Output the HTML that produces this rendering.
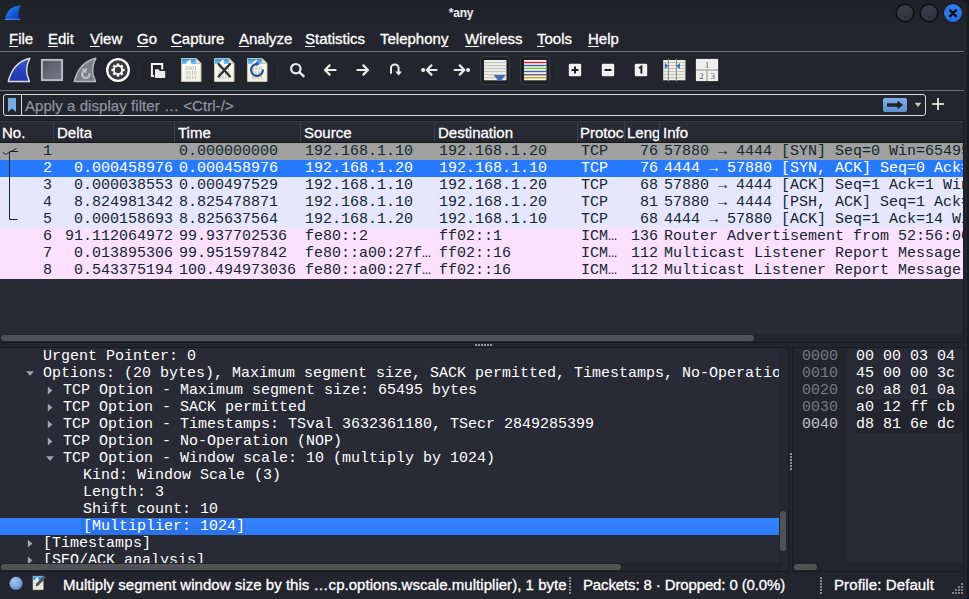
<!DOCTYPE html>
<html>
<head>
<meta charset="utf-8">
<title>*any</title>
<style>
*{box-sizing:border-box;margin:0;padding:0}
html,body{width:969px;height:599px;overflow:hidden;background:#23252e;font-family:"Liberation Sans",sans-serif}
body{position:relative;font-family:"Liberation Sans",sans-serif;color:#fff;font-size:15px}
.abs{position:absolute}
/* title bar */
#titlebar{left:0;top:0;width:969px;height:27px;background:linear-gradient(#1f2129,#23252e)}
#title{left:0;top:0;width:922px;text-align:center;font-size:12px;line-height:27px;font-weight:bold;color:#eeeeef;letter-spacing:-0.15px}
.wbtn{width:18px;height:18px;border-radius:9px;top:4px;background:linear-gradient(#393c48,#30333e);border:1px solid #0b0d12;box-shadow:0 0 0 0.4px #0b0d12}
/* menubar */
#menubar{left:0;top:27px;width:969px;height:24px;background:#23252e}
.menu{-webkit-text-stroke:0.3px #fff;top:30px;font-size:15px;line-height:18px;color:#fff;white-space:nowrap}
.menu u{text-decoration:underline;text-underline-offset:2px;text-decoration-thickness:1px}
.hline{left:0;width:964px;height:1px;background:#6f717a}
/* toolbar */
#toolbar{left:0;top:52px;width:969px;height:38px;background:#23252e}
.vsep{top:61px;width:1px;height:19px;background:#2a2c36}
/* filter */
#filterbox{left:3px;top:94px;width:923px;height:22px;border:1px solid #dcdcd6;border-radius:3px;background:#23252e}
#filtertext{left:25px;top:97px;font-size:15px;line-height:18px;color:#9092a0;-webkit-text-stroke:0.25px #9092a0;letter-spacing:0.06px;white-space:nowrap}
/* packet list */
#plhead{left:0;top:121px;width:963px;height:22px;background:linear-gradient(#292c37,#242630);border-top:1px solid #373a44;border-bottom:1px solid #14161e}
.hcell{-webkit-text-stroke:0.3px #fff;top:124px;font-size:15px;line-height:18px;color:#fff;white-space:nowrap;overflow:hidden}
.hsep{top:122px;width:1px;height:20px;background:#3d3f4a}
.prow{left:0;width:963px;height:17px;font-family:"Liberation Mono",monospace;font-size:15px;line-height:17px;color:#12272e;white-space:nowrap;overflow:hidden}
.prow span{position:absolute;top:0;height:17px;overflow:hidden;white-space:pre}
.c0{left:0;width:52px;text-align:right}
.c1{left:53px;width:120px;text-align:right}
.c2{left:179px;width:122px}
.c3{left:305px;width:129px}
.c4{left:439px;width:139px}
.c5{left:581px;width:43px}
.c6{left:625px;width:33px;text-align:right}
.c7{left:664px;width:299px}
.syn{background:#a0a0a0}
.sel{background:#277aff;color:#fff}
.tcp{background:#e7e6ff}
.icmp{background:#fce0ff}
/* details */
.drow{left:0;width:779px;height:17px;font-family:"Liberation Mono",monospace;font-size:15px;line-height:17px;color:#fff;white-space:pre;overflow:hidden}
.tri{position:absolute;width:0;height:0}
/* hex */
.hx{font-family:"Liberation Mono",monospace;font-size:15px;line-height:17px;white-space:pre}
/* status */
.st{-webkit-text-stroke:0.3px #fff;top:576px;font-size:15px;line-height:18px;color:#fff;white-space:nowrap}
</style>
</head>
<body>
<!-- TITLE BAR -->
<div id="titlebar" class="abs"></div>
<div id="title" class="abs">*any</div>
<svg class="abs" style="left:4px;top:4px" width="18" height="17" viewBox="0 0 18 17"><defs><linearGradient id="tg" x1="0.1" y1="0.1" x2="0.85" y2="0.95"><stop offset="0" stop-color="#2f93f4"/><stop offset="0.45" stop-color="#1565dc"/><stop offset="1" stop-color="#0838ac"/></linearGradient></defs><path d="M1.1 15.9 C1.9 8.6 5.4 2.6 17 1.2 C14.2 5.5 13.8 10.5 16.1 15.9 Z" fill="url(#tg)"/><path d="M1.4 15.5 Q8 14.6 15.9 15.5" stroke="#7fb0f4" stroke-width="0.9" opacity="0.75" fill="none"/></svg>
<div class="abs wbtn" style="left:896px"></div>
<div class="abs wbtn" style="left:920px"></div>
<div class="abs wbtn" style="left:944px;background:linear-gradient(#2d7df6,#2670e0);border-color:#2a77ee"></div>
<svg class="abs" style="left:944px;top:4px" width="18" height="18" viewBox="0 0 18 18"><path d="M6.1 6.3 L11.9 12.1 M11.9 6.3 L6.1 12.1" stroke="#06080d" stroke-width="2.4" stroke-linecap="round"/></svg>

<!-- MENU BAR -->
<div id="menubar" class="abs"></div>
<div class="abs menu" style="left:9px"><u>F</u>ile</div>
<div class="abs menu" style="left:48px"><u>E</u>dit</div>
<div class="abs menu" style="left:90px"><u>V</u>iew</div>
<div class="abs menu" style="left:137px"><u>G</u>o</div>
<div class="abs menu" style="left:171px"><u>C</u>apture</div>
<div class="abs menu" style="left:239px"><u>A</u>nalyze</div>
<div class="abs menu" style="left:305px"><u>S</u>tatistics</div>
<div class="abs menu" style="left:380px">Telephon<u>y</u></div>
<div class="abs menu" style="left:465px"><u>W</u>ireless</div>
<div class="abs menu" style="left:537px"><u>T</u>ools</div>
<div class="abs menu" style="left:588px"><u>H</u>elp</div>
<div class="abs hline" style="top:51px"></div>

<!-- TOOLBAR -->
<div id="toolbar" class="abs"></div>
<div class="abs hline" style="top:90px"></div>

<!-- shark start -->
<svg class="abs" style="left:6px;top:56px" width="27" height="28" viewBox="0 0 27 28"><defs><linearGradient id="sb" x1="0" y1="0" x2="0" y2="1"><stop offset="0" stop-color="#3a55d6"/><stop offset="1" stop-color="#1d36ad"/></linearGradient></defs>
<path d="M2.3 25.5 C5 14.5 12 5.2 23.8 2.3 C19.8 9.5 19.6 17.5 23.5 25.5 Z" fill="url(#sb)" stroke="#dcdde2" stroke-width="1.4" stroke-linejoin="round"/></svg>
<!-- stop -->
<svg class="abs" style="left:40px;top:58px" width="24" height="24" viewBox="0 0 24 24"><defs><linearGradient id="sq" x1="0" y1="0" x2="1" y2="1"><stop offset="0" stop-color="#555864"/><stop offset="1" stop-color="#777a85"/></linearGradient></defs>
<rect x="1.9" y="1.9" width="20.2" height="20.2" fill="url(#sq)" stroke="#b6b8c2" stroke-width="2"/></svg>
<!-- restart -->
<svg class="abs" style="left:72px;top:56px" width="27" height="28" viewBox="0 0 27 28">
<path d="M2.3 25.5 C5 14.5 12 5.2 23.8 2.3 C19.8 9.5 19.6 17.5 23.5 25.5 Z" fill="#7b7e89" stroke="#b7b9c1" stroke-width="1.4" stroke-linejoin="round"/>
<path d="M17.2 17.1 A3.6 3.6 0 1 1 12 15.2" fill="none" stroke="#bcbec6" stroke-width="2.1"/><path d="M9.5 13 L15.1 12.2 L14 17.8 Z" fill="#bcbec6"/></svg>
<!-- options gear -->
<svg class="abs" style="left:105px;top:57px" width="26" height="26" viewBox="0 0 26 26">
<circle cx="13" cy="13" r="10.8" fill="#3b3b3f" stroke="#fff" stroke-width="2.3"/>
<g fill="#fff"><circle cx="13" cy="13" r="5"/>
<g id="teeth"><rect x="11.7" y="6.5" width="2.6" height="13" rx="0.5"/><rect x="11.7" y="6.5" width="2.6" height="13" rx="0.5" transform="rotate(45 13 13)"/><rect x="11.7" y="6.5" width="2.6" height="13" rx="0.5" transform="rotate(90 13 13)"/><rect x="11.7" y="6.5" width="2.6" height="13" rx="0.5" transform="rotate(135 13 13)"/></g></g>
<circle cx="13" cy="13" r="3.2" fill="#3b3b3f"/></svg>
<div class="abs vsep" style="left:139px"></div>
<!-- open -->
<svg class="abs" style="left:150px;top:61px" width="17" height="18" viewBox="0 0 17 18"><path d="M4 14.9 H1.9 V3.1 H12.2 V8.6" fill="none" stroke="#f4f4f4" stroke-width="2"/><path d="M5 8.2 H8.6 L9.8 10 H15.2 V16.9 H5 Z" fill="#ececea" stroke="#23252e" stroke-width="1.8" paint-order="stroke fill"/></svg>
<svg class="abs" style="left:181px;top:58px" width="21" height="24" viewBox="0 0 21 24"><defs><linearGradient id="dg181" x1="0" y1="0" x2="0" y2="1"><stop offset="0" stop-color="#ffffff"/><stop offset="1" stop-color="#f1f0dc"/></linearGradient><linearGradient id="dh181" x1="0" y1="0" x2="0" y2="1"><stop offset="0" stop-color="#2f95e8"/><stop offset="1" stop-color="#86c4f2"/></linearGradient></defs>
<path d="M0.5 0.5 H15 L20 5.5 V23.5 H0.5 Z" fill="url(#dg181)" stroke="#c3c2ae" stroke-width="1"/>
<path d="M1 1 H14.8 L19.5 5.7 V6 H1 Z" fill="url(#dh181)"/>
<path d="M5.2 6 C5.8 3.8 7.6 2 10.2 1.6 C9.5 3 9.5 4.6 10.2 6 Z" fill="#fff" opacity="0.95"/>
<path d="M15 0.5 V5.5 H20 Z" fill="#e9e8da" stroke="#c3c2ae" stroke-width="0.7"/>
<rect x="5.2" y="8.6" width="1.9" height="3.2" rx="0.8" fill="none" stroke="#b9b9b0" stroke-width="0.7"/><rect x="8.5" y="8.4" width="0.9" height="3.6" fill="#b9b9b0"/><rect x="10.6" y="8.6" width="1.9" height="3.2" rx="0.8" fill="none" stroke="#b9b9b0" stroke-width="0.7"/><rect x="13.9" y="8.4" width="0.9" height="3.6" fill="#b9b9b0"/><rect x="5.2" y="13.2" width="1.9" height="3.2" rx="0.8" fill="none" stroke="#b9b9b0" stroke-width="0.7"/><rect x="8.5" y="13.0" width="0.9" height="3.6" fill="#b9b9b0"/><rect x="11.2" y="13.0" width="0.9" height="3.6" fill="#b9b9b0"/><rect x="13.3" y="13.2" width="1.9" height="3.2" rx="0.8" fill="none" stroke="#b9b9b0" stroke-width="0.7"/><rect x="5.2" y="17.8" width="1.9" height="3.2" rx="0.8" fill="none" stroke="#b9b9b0" stroke-width="0.7"/><rect x="8.5" y="17.6" width="0.9" height="3.6" fill="#b9b9b0"/><rect x="11.2" y="17.6" width="0.9" height="3.6" fill="#b9b9b0"/><rect x="13.9" y="17.6" width="0.9" height="3.6" fill="#b9b9b0"/>
</svg>
<svg class="abs" style="left:214px;top:58px" width="21" height="24" viewBox="0 0 21 24"><defs><linearGradient id="dg214" x1="0" y1="0" x2="0" y2="1"><stop offset="0" stop-color="#ffffff"/><stop offset="1" stop-color="#f1f0dc"/></linearGradient><linearGradient id="dh214" x1="0" y1="0" x2="0" y2="1"><stop offset="0" stop-color="#2f95e8"/><stop offset="1" stop-color="#86c4f2"/></linearGradient></defs>
<path d="M0.5 0.5 H15 L20 5.5 V23.5 H0.5 Z" fill="url(#dg214)" stroke="#c3c2ae" stroke-width="1"/>
<path d="M1 1 H14.8 L19.5 5.7 V6 H1 Z" fill="url(#dh214)"/>
<path d="M5.2 6 C5.8 3.8 7.6 2 10.2 1.6 C9.5 3 9.5 4.6 10.2 6 Z" fill="#fff" opacity="0.95"/>
<path d="M15 0.5 V5.5 H20 Z" fill="#e9e8da" stroke="#c3c2ae" stroke-width="0.7"/>
<rect x="5.2" y="8.6" width="1.9" height="3.2" rx="0.8" fill="none" stroke="#b9b9b0" stroke-width="0.7"/><rect x="8.5" y="8.4" width="0.9" height="3.6" fill="#b9b9b0"/><rect x="10.6" y="8.6" width="1.9" height="3.2" rx="0.8" fill="none" stroke="#b9b9b0" stroke-width="0.7"/><rect x="13.9" y="8.4" width="0.9" height="3.6" fill="#b9b9b0"/><rect x="5.2" y="13.2" width="1.9" height="3.2" rx="0.8" fill="none" stroke="#b9b9b0" stroke-width="0.7"/><rect x="8.5" y="13.0" width="0.9" height="3.6" fill="#b9b9b0"/><rect x="11.2" y="13.0" width="0.9" height="3.6" fill="#b9b9b0"/><rect x="13.3" y="13.2" width="1.9" height="3.2" rx="0.8" fill="none" stroke="#b9b9b0" stroke-width="0.7"/><rect x="5.2" y="17.8" width="1.9" height="3.2" rx="0.8" fill="none" stroke="#b9b9b0" stroke-width="0.7"/><rect x="8.5" y="17.6" width="0.9" height="3.6" fill="#b9b9b0"/><rect x="11.2" y="17.6" width="0.9" height="3.6" fill="#b9b9b0"/><rect x="13.9" y="17.6" width="0.9" height="3.6" fill="#b9b9b0"/>
<path d="M4.6 6 L16 18.4 M16 6 L4.6 18.4" stroke="#2a2c33" stroke-width="2.2" stroke-linecap="round"/></svg>
<svg class="abs" style="left:247px;top:58px" width="21" height="24" viewBox="0 0 21 24"><defs><linearGradient id="dg247" x1="0" y1="0" x2="0" y2="1"><stop offset="0" stop-color="#ffffff"/><stop offset="1" stop-color="#f1f0dc"/></linearGradient><linearGradient id="dh247" x1="0" y1="0" x2="0" y2="1"><stop offset="0" stop-color="#2f95e8"/><stop offset="1" stop-color="#86c4f2"/></linearGradient></defs>
<path d="M0.5 0.5 H15 L20 5.5 V23.5 H0.5 Z" fill="url(#dg247)" stroke="#c3c2ae" stroke-width="1"/>
<path d="M1 1 H14.8 L19.5 5.7 V6 H1 Z" fill="url(#dh247)"/>
<path d="M5.2 6 C5.8 3.8 7.6 2 10.2 1.6 C9.5 3 9.5 4.6 10.2 6 Z" fill="#fff" opacity="0.95"/>
<path d="M15 0.5 V5.5 H20 Z" fill="#e9e8da" stroke="#c3c2ae" stroke-width="0.7"/>
<rect x="5.2" y="8.6" width="1.9" height="3.2" rx="0.8" fill="none" stroke="#b9b9b0" stroke-width="0.7"/><rect x="8.5" y="8.4" width="0.9" height="3.6" fill="#b9b9b0"/><rect x="10.6" y="8.6" width="1.9" height="3.2" rx="0.8" fill="none" stroke="#b9b9b0" stroke-width="0.7"/><rect x="13.9" y="8.4" width="0.9" height="3.6" fill="#b9b9b0"/><rect x="5.2" y="13.2" width="1.9" height="3.2" rx="0.8" fill="none" stroke="#b9b9b0" stroke-width="0.7"/><rect x="8.5" y="13.0" width="0.9" height="3.6" fill="#b9b9b0"/><rect x="11.2" y="13.0" width="0.9" height="3.6" fill="#b9b9b0"/><rect x="13.3" y="13.2" width="1.9" height="3.2" rx="0.8" fill="none" stroke="#b9b9b0" stroke-width="0.7"/><rect x="5.2" y="17.8" width="1.9" height="3.2" rx="0.8" fill="none" stroke="#b9b9b0" stroke-width="0.7"/><rect x="8.5" y="17.6" width="0.9" height="3.6" fill="#b9b9b0"/><rect x="11.2" y="17.6" width="0.9" height="3.6" fill="#b9b9b0"/><rect x="13.9" y="17.6" width="0.9" height="3.6" fill="#b9b9b0"/>
<path d="M15.9 11.5 A5.9 5.9 0 1 1 9.5 6.1" fill="none" stroke="#1b4b9e" stroke-width="2.1"/><path d="M9.2 3.6 L12.6 5.9 L9.2 8 Z" fill="#1b4b9e"/></svg>
<div class="abs vsep" style="left:277px"></div>
<!-- find -->
<svg class="abs" style="left:289px;top:62px" width="18" height="18" viewBox="0 0 18 18"><circle cx="6.8" cy="6.7" r="4.7" fill="none" stroke="#ececec" stroke-width="2.2"/><path d="M10.2 10.2 L14.6 14.2" stroke="#ececec" stroke-width="2.3" stroke-linecap="round"/></svg>
<!-- back -->
<svg class="abs" style="left:322px;top:62px" width="16" height="16" viewBox="0 0 16 16"><path d="M13.6 8 H3.4 M7.6 3.4 L3 8 L7.6 12.6" fill="none" stroke="#ececec" stroke-width="2.2" stroke-linecap="round" stroke-linejoin="round"/></svg>
<!-- forward -->
<svg class="abs" style="left:355px;top:62px" width="16" height="16" viewBox="0 0 16 16"><path d="M2.4 8 H12.6 M8.4 3.4 L13 8 L8.4 12.6" fill="none" stroke="#ececec" stroke-width="2.2" stroke-linecap="round" stroke-linejoin="round"/></svg>
<!-- goto -->
<svg class="abs" style="left:388px;top:62px" width="16" height="16" viewBox="0 0 16 16"><path d="M3 11 V6.2 A3.8 3.8 0 0 1 10.6 6.2 V11.5" fill="none" stroke="#ececec" stroke-width="2" stroke-linecap="round"/><path d="M7.2 9.6 H14 L10.6 13.6 Z" fill="#ececec"/></svg>
<!-- first -->
<svg class="abs" style="left:420px;top:62px" width="19" height="16" viewBox="0 0 19 16"><circle cx="3.1" cy="8" r="2.05" fill="#ececec"/><path d="M16.6 8 H7.4 M11.4 3.4 L6.8 8 L11.4 12.6" fill="none" stroke="#ececec" stroke-width="2.2" stroke-linecap="round" stroke-linejoin="round"/></svg>
<!-- last -->
<svg class="abs" style="left:453px;top:62px" width="19" height="16" viewBox="0 0 19 16"><circle cx="15.1" cy="8" r="2.05" fill="#ececec"/><path d="M1.6 8 H11 M6.8 3.4 L11.4 8 L6.8 12.6" fill="none" stroke="#ececec" stroke-width="2.2" stroke-linecap="round" stroke-linejoin="round"/></svg>
<!-- autoscroll (checked) -->
<div class="abs" style="left:480px;top:56px;width:30px;height:29px;border:1px solid #373943;border-radius:4px;background:#1e2028"></div>
<svg class="abs" style="left:484px;top:60px" width="23" height="22" viewBox="0 0 23 22"><rect x="0" y="0" width="22.4" height="20.3" fill="#efefec"/><g fill="#c4c3b8"><rect x="0" y="2" width="22.4" height="1.1"/><rect x="0" y="5" width="22.4" height="1.1"/><rect x="0" y="8" width="22.4" height="1.1"/><rect x="0" y="11" width="22.4" height="1.1"/><rect x="0" y="14" width="22.4" height="1.1"/><rect x="0" y="17" width="22.4" height="1.1"/></g><path d="M9.6 15 H21.6 L17 20.8 H14.2 Z" fill="#3d6fc0"/></svg>
<!-- colorize (checked) -->
<div class="abs" style="left:520px;top:56px;width:30px;height:29px;border:1px solid #373943;border-radius:4px;background:#1e2028"></div>
<svg class="abs" style="left:524px;top:60px" width="23" height="21" viewBox="0 0 23 21"><rect x="0" y="0" width="22.4" height="20.3" fill="#f6f6f6"/><rect x="0" y="1.8" width="22.4" height="1.4" fill="#ea1f2a"/><rect x="0" y="4.8" width="22.4" height="1.4" fill="#3465a4"/><rect x="0" y="7.7" width="22.4" height="1.4" fill="#73c221"/><rect x="0" y="10.8" width="22.4" height="1.4" fill="#3465a4"/><rect x="0" y="14" width="22.4" height="1.4" fill="#75507b"/><rect x="0" y="17" width="22.4" height="1.4" fill="#c9a40a"/></svg>
<div class="abs vsep" style="left:556px"></div>
<!-- zoom in -->
<svg class="abs" style="left:568px;top:63px" width="14" height="14" viewBox="0 0 14 14"><rect x="0.8" y="0.8" width="12.4" height="12.4" rx="1.2" fill="#f0f0f0"/><path d="M7 3.6 V10.4 M3.6 7 H10.4" stroke="#1d1f27" stroke-width="2"/></svg>
<!-- zoom out -->
<svg class="abs" style="left:601px;top:63px" width="14" height="14" viewBox="0 0 14 14"><rect x="0.8" y="0.8" width="12.4" height="12.4" rx="1.2" fill="#f0f0f0"/><path d="M3.6 7 H10.4" stroke="#1d1f27" stroke-width="2"/></svg>
<!-- zoom 1 -->
<svg class="abs" style="left:634px;top:63px" width="14" height="14" viewBox="0 0 14 14"><rect x="0.8" y="0.8" width="12.4" height="12.4" rx="1.2" fill="#f0f0f0"/><path d="M5 5.2 L7.4 3.6 V10.6" fill="none" stroke="#1d1f27" stroke-width="1.9"/></svg>
<!-- resize columns -->
<svg class="abs" style="left:663px;top:58px" width="23" height="24" viewBox="0 0 23 24"><rect x="0.2" y="2" width="22.2" height="20.3" fill="#efefec"/><g fill="#c4c3b8"><rect x="0.2" y="4" width="22.2" height="1.1"/><rect x="0.2" y="7" width="22.2" height="1.1"/><rect x="0.2" y="10" width="22.2" height="1.1"/><rect x="0.2" y="13" width="22.2" height="1.1"/><rect x="0.2" y="16" width="22.2" height="1.1"/><rect x="0.2" y="19" width="22.2" height="1.1"/></g><rect x="4.9" y="0.8" width="1.1" height="22.6" fill="#8d8d87"/><rect x="12.9" y="0.8" width="1.1" height="22.6" fill="#8d8d87"/><path d="M1.8 5 V11 L5.6 8 Z" fill="#3d6fc0"/><path d="M17 5 V11 L13.2 8 Z" fill="#3d6fc0"/></svg>
<!-- layout -->
<svg class="abs" style="left:695px;top:58px" width="24" height="24" viewBox="0 0 24 24"><rect x="0.9" y="0.9" width="22.2" height="22.2" fill="#efefed"/><rect x="0.9" y="11.4" width="22.2" height="1.2" fill="#9c9c98"/><rect x="11.4" y="12" width="1.2" height="11" fill="#9c9c98"/><g font-family="Liberation Serif, serif" font-size="9" fill="#55575c" text-anchor="middle"><text x="12" y="9.6">1</text><text x="6.4" y="21">2</text><text x="17.8" y="21">3</text></g></svg>


<!-- FILTER BAR -->
<div id="filterbox" class="abs"></div>
<div class="abs" style="left:21px;top:95px;width:1px;height:20px;background:#dcdcd6"></div>
<svg class="abs" style="left:7px;top:97px" width="10" height="16" viewBox="0 0 10 16"><path d="M1 1 H9 V15 L5 11.5 L1 15 Z" fill="#78aae6"/></svg>
<div id="filtertext" class="abs">Apply a display filter … &lt;Ctrl-/&gt;</div>

<svg class="abs" style="left:882px;top:97px" width="26" height="16" viewBox="0 0 26 16"><defs><linearGradient id="ab" x1="0" y1="0" x2="0" y2="1"><stop offset="0" stop-color="#82ade6"/><stop offset="1" stop-color="#5f90d2"/></linearGradient></defs><rect x="1" y="1" width="24" height="14" rx="2" fill="url(#ab)"/><path d="M5 6.2 H15.5 V3.6 L21 8 L15.5 12.4 V9.8 H5 Z" fill="#21242d"/></svg>
<svg class="abs" style="left:914px;top:102px" width="8" height="6" viewBox="0 0 8 6"><path d="M0.6 0.8 H7.4 L4 5 Z" fill="#c9c9c2"/></svg>
<svg class="abs" style="left:931px;top:97px" width="14" height="14" viewBox="0 0 14 14"><path d="M7 1 V13 M1 7 H13" stroke="#fff" stroke-width="1.6"/></svg>


<!-- PACKET LIST -->
<div class="abs" style="left:0;top:121px;width:963px;height:222px;background:#282a36"></div>
<div class="abs" style="left:0;top:120px;width:964px;height:1px;background:#1b1c22"></div>
<div id="plhead" class="abs"></div>
<div class="abs hcell" style="left:2px">No.</div>
<div class="abs hcell" style="left:57px">Delta</div>
<div class="abs hcell" style="left:178px">Time</div>
<div class="abs hcell" style="left:304px">Source</div>
<div class="abs hcell" style="left:438px">Destination</div>
<div class="abs hcell" style="left:580px;width:44px">Protocol</div>
<div class="abs hcell" style="left:627px;width:32px">Length</div>
<div class="abs hcell" style="left:663px">Info</div>
<div class="abs hsep" style="left:53px"></div>
<div class="abs hsep" style="left:174px"></div>
<div class="abs hsep" style="left:300px"></div>
<div class="abs hsep" style="left:434px"></div>
<div class="abs hsep" style="left:577px"></div>
<div class="abs hsep" style="left:624px"></div>
<div class="abs hsep" style="left:659px"></div>

<div class="abs prow syn" style="top:143px"><span class="c0">1</span><span class="c1"></span><span class="c2">0.000000000</span><span class="c3">192.168.1.10</span><span class="c4">192.168.1.20</span><span class="c5">TCP</span><span class="c6">76</span><span class="c7">57880 → 4444 [SYN] Seq=0 Win=65495 Len=0</span></div>
<div class="abs prow sel" style="top:160px"><span class="c0">2</span><span class="c1">0.000458976</span><span class="c2">0.000458976</span><span class="c3">192.168.1.20</span><span class="c4">192.168.1.10</span><span class="c5">TCP</span><span class="c6">76</span><span class="c7">4444 → 57880 [SYN, ACK] Seq=0 Ack=1 Win=65483</span></div>
<div class="abs prow tcp" style="top:177px"><span class="c0">3</span><span class="c1">0.000038553</span><span class="c2">0.000497529</span><span class="c3">192.168.1.10</span><span class="c4">192.168.1.20</span><span class="c5">TCP</span><span class="c6">68</span><span class="c7">57880 → 4444 [ACK] Seq=1 Ack=1 Win=65536</span></div>
<div class="abs prow tcp" style="top:194px"><span class="c0">4</span><span class="c1">8.824981342</span><span class="c2">8.825478871</span><span class="c3">192.168.1.10</span><span class="c4">192.168.1.20</span><span class="c5">TCP</span><span class="c6">81</span><span class="c7">57880 → 4444 [PSH, ACK] Seq=1 Ack=1 Win=65536</span></div>
<div class="abs prow tcp" style="top:211px"><span class="c0">5</span><span class="c1">0.000158693</span><span class="c2">8.825637564</span><span class="c3">192.168.1.20</span><span class="c4">192.168.1.10</span><span class="c5">TCP</span><span class="c6">68</span><span class="c7">4444 → 57880 [ACK] Seq=1 Ack=14 Win=65536</span></div>
<div class="abs prow icmp" style="top:228px"><span class="c0">6</span><span class="c1">91.112064972</span><span class="c2">99.937702536</span><span class="c3">fe80::2</span><span class="c4">ff02::1</span><span class="c5">ICM…</span><span class="c6">136</span><span class="c7">Router Advertisement from 52:56:00:00:00:02</span></div>
<div class="abs prow icmp" style="top:245px"><span class="c0">7</span><span class="c1">0.013895306</span><span class="c2">99.951597842</span><span class="c3">fe80::a00:27f…</span><span class="c4">ff02::16</span><span class="c5">ICM…</span><span class="c6">112</span><span class="c7">Multicast Listener Report Message v2</span></div>
<div class="abs prow icmp" style="top:262px"><span class="c0">8</span><span class="c1">0.543375194</span><span class="c2">100.494973036</span><span class="c3">fe80::a00:27f…</span><span class="c4">ff02::16</span><span class="c5">ICM…</span><span class="c6">112</span><span class="c7">Multicast Listener Report Message v2</span></div>

<svg class="abs" style="left:0;top:143px" width="24" height="90" viewBox="0 0 24 90"><g fill="none" stroke="#16262d" stroke-width="1"><path d="M2.5 9 L5.5 11.5 L16.5 5.5"/><path d="M9.5 8.5 H18"/><path d="M9.5 8.5 V76.5 H17.5"/></g></svg>
<!-- packet list scrollbars -->
<div class="abs" style="left:0;top:334px;width:963px;height:8px;background:#22242e"></div><div class="abs" style="left:0;top:342px;width:964px;height:1px;background:#191b22"></div><div class="abs" style="left:963px;top:121px;width:1px;height:222px;background:#191b22"></div>
<div class="abs" style="left:1px;top:335px;width:753px;height:6px;border-radius:3px;background:#505257"></div>
<div class="abs" style="left:475px;top:344px;width:17px;height:2px;background:repeating-linear-gradient(90deg,#989aa0 0 2px,transparent 2px 3px)"></div>


<!-- DETAILS -->
<div class="abs" style="left:0;top:347px;width:789px;height:225px;background:#191b22"></div>
<div class="abs" style="left:0;top:348px;width:788px;height:223px;background:#282a36;overflow:hidden">
<div class="abs drow" style="top:0px;"><span style="position:absolute;left:43px;top:0">Urgent Pointer: 0</span></div>
<div class="abs drow" style="top:17px;"><span style="position:absolute;left:43px;top:0">Options: (20 bytes), Maximum segment size, SACK permitted, Timestamps, No-Operation (NOP), Window scale</span></div>
<svg class="abs" style="left:25px;top:17px" width="10" height="17" viewBox="0 0 10 17"><path d="M1 6.2 H9 L5 10.8 Z" fill="#a3a5ab"/></svg>
<div class="abs drow" style="top:34px;"><span style="position:absolute;left:63px;top:0">TCP Option - Maximum segment size: 65495 bytes</span></div>
<svg class="abs" style="left:45px;top:34px" width="10" height="17" viewBox="0 0 10 17"><path d="M2.8 4.6 V12.6 L7.4 8.6 Z" fill="#a3a5ab"/></svg>
<div class="abs drow" style="top:51px;"><span style="position:absolute;left:63px;top:0">TCP Option - SACK permitted</span></div>
<svg class="abs" style="left:45px;top:51px" width="10" height="17" viewBox="0 0 10 17"><path d="M2.8 4.6 V12.6 L7.4 8.6 Z" fill="#a3a5ab"/></svg>
<div class="abs drow" style="top:68px;"><span style="position:absolute;left:63px;top:0">TCP Option - Timestamps: TSval 3632361180, TSecr 2849285399</span></div>
<svg class="abs" style="left:45px;top:68px" width="10" height="17" viewBox="0 0 10 17"><path d="M2.8 4.6 V12.6 L7.4 8.6 Z" fill="#a3a5ab"/></svg>
<div class="abs drow" style="top:85px;"><span style="position:absolute;left:63px;top:0">TCP Option - No-Operation (NOP)</span></div>
<svg class="abs" style="left:45px;top:85px" width="10" height="17" viewBox="0 0 10 17"><path d="M2.8 4.6 V12.6 L7.4 8.6 Z" fill="#a3a5ab"/></svg>
<div class="abs drow" style="top:102px;"><span style="position:absolute;left:63px;top:0">TCP Option - Window scale: 10 (multiply by 1024)</span></div>
<svg class="abs" style="left:45px;top:102px" width="10" height="17" viewBox="0 0 10 17"><path d="M1 6.2 H9 L5 10.8 Z" fill="#a3a5ab"/></svg>
<div class="abs drow" style="top:119px;"><span style="position:absolute;left:83px;top:0">Kind: Window Scale (3)</span></div>
<div class="abs drow" style="top:136px;"><span style="position:absolute;left:83px;top:0">Length: 3</span></div>
<div class="abs drow" style="top:153px;"><span style="position:absolute;left:83px;top:0">Shift count: 10</span></div>
<div class="abs drow" style="top:170px;background:linear-gradient(#3683ff,#2c7bfb);"><span style="position:absolute;left:81px;top:0;padding-left:2px;height:17px;background:linear-gradient(#2f78ee,#2972ea)">[Multiplier: 1024]</span></div>
<div class="abs drow" style="top:187px;"><span style="position:absolute;left:43px;top:0">[Timestamps]</span></div>
<svg class="abs" style="left:25px;top:187px" width="10" height="17" viewBox="0 0 10 17"><path d="M2.8 4.6 V12.6 L7.4 8.6 Z" fill="#a3a5ab"/></svg>
<div class="abs drow" style="top:204px;"><span style="position:absolute;left:43px;top:0">[SEQ/ACK analysis]</span></div>
<svg class="abs" style="left:25px;top:204px" width="10" height="17" viewBox="0 0 10 17"><path d="M2.8 4.6 V12.6 L7.4 8.6 Z" fill="#a3a5ab"/></svg>
<div class="abs" style="left:779px;top:0;width:9px;height:223px;background:#252731"></div>
<div class="abs" style="left:780px;top:163px;width:6px;height:40px;border-radius:3px;background:#505257"></div>
<div class="abs" style="left:0;top:215px;width:788px;height:8px;background:#22242e"></div>
<div class="abs" style="left:1px;top:216px;width:620px;height:6px;border-radius:3px;background:#505257"></div>
<div class="abs" style="left:779px;top:215px;width:9px;height:8px;background:#252731;border-left:1px solid #1e2028;border-top:1px solid #1e2028"></div>
</div>
<div class="abs" style="left:790px;top:453px;width:2px;height:17px;background:repeating-linear-gradient(180deg,#8e9096 0 2px,transparent 2px 3px)"></div>

<!-- HEX -->
<div class="abs" style="left:792px;top:347px;width:172px;height:225px;background:#191b22"></div>
<div class="abs" style="left:793px;top:348px;width:170px;height:223px;background:#23252e;overflow:hidden">
<div class="abs" style="left:54px;top:0;width:116px;height:215px;background:#282a36"></div><div class="abs" style="left:63px;top:51px;width:107px;height:34px;background:#23252e"></div>
<div class="abs hx" style="left:9px;top:0px;color:#787a81">0000</div>
<div class="abs hx" style="left:63px;top:0px;color:#fff">00 00 03 04</div>
<div class="abs hx" style="left:9px;top:17px;color:#787a81">0010</div>
<div class="abs hx" style="left:63px;top:17px;color:#fff">45 00 00 3c</div>
<div class="abs hx" style="left:9px;top:34px;color:#787a81">0020</div>
<div class="abs hx" style="left:63px;top:34px;color:#fff">c0 a8 01 0a</div>
<div class="abs hx" style="left:9px;top:51px;color:#787a81">0030</div>
<div class="abs hx" style="left:63px;top:51px;color:#fff">a0 12 ff cb</div>
<div class="abs hx" style="left:9px;top:68px;color:#c2c4c8">0040</div>
<div class="abs hx" style="left:63px;top:68px;color:#fff">d8 81 6e dc</div>
<div class="abs" style="left:1px;top:216px;width:23px;height:6px;border-radius:3px;background:#505257"></div>
</div>

<!-- STATUS BAR -->

<svg class="abs" style="left:8.5px;top:575.5px" width="15" height="15" viewBox="0 0 15 15"><defs><radialGradient id="sg" cx="0.4" cy="0.35" r="0.7"><stop offset="0" stop-color="#a9c6ee"/><stop offset="1" stop-color="#5d8fd6"/></radialGradient></defs><circle cx="7" cy="7.3" r="6.5" fill="url(#sg)"/></svg>
<svg class="abs" style="left:32px;top:575px" width="15" height="16" viewBox="0 0 15 16"><rect x="1" y="1.2" width="10.2" height="13.6" fill="#f0efe6" stroke="#b9b8a8" stroke-width="0.6"/><rect x="1.3" y="1.5" width="9.6" height="3.6" fill="#3d9be8"/><path d="M3.4 5.1 C3.7 3.6 4.8 2.4 6.4 2.1 C6 3 6 4.2 6.4 5.1 Z" fill="#fff"/><path d="M2.6 8 H9.4 M2.6 10.4 H9.4 M2.6 12.6 H9.4" stroke="#c9c8bc" stroke-width="0.7"/><path d="M12.2 0.8 L14 2.6 L6.6 10 L4.2 10.8 L4.9 8.2 Z" fill="#55575e" stroke="#33353c" stroke-width="0.5"/><path d="M4.2 10.8 L4.7 9 L6 10.2 Z" fill="#15171c"/></svg>
<div class="abs st" style="left:63px;letter-spacing:0.035px">Multiply segment window size by this …cp.options.wscale.multiplier), 1 byte</div>
<div class="abs st" style="left:583px;letter-spacing:-0.13px">Packets: 8 · Dropped: 0 (0.0%)</div>
<div class="abs st" style="left:834px;letter-spacing:0.1px">Profile: Default</div>
<div class="abs" style="left:569px;top:577px;width:2px;height:17px;background:repeating-linear-gradient(180deg,#8c8e95 0 2px,transparent 2px 3px)"></div>
<div class="abs" style="left:820px;top:577px;width:2px;height:17px;background:repeating-linear-gradient(180deg,#8c8e95 0 2px,transparent 2px 3px)"></div>
<svg class="abs" style="left:950px;top:581px" width="15" height="15" viewBox="0 0 15 15"><g fill="#80828a"><rect x="11" y="2" width="2" height="2"/><rect x="8" y="5" width="2" height="2"/><rect x="11" y="5" width="2" height="2"/><rect x="5" y="8" width="2" height="2"/><rect x="8" y="8" width="2" height="2"/><rect x="11" y="8" width="2" height="2"/><rect x="2" y="11" width="2" height="2"/><rect x="5" y="11" width="2" height="2"/><rect x="8" y="11" width="2" height="2"/><rect x="11" y="11" width="2" height="2"/></g></svg>

<div class="abs" style="left:967px;top:0;width:2px;height:599px;background:#181a21"></div>
<svg class="abs" style="left:963px;top:0" width="6" height="6" viewBox="0 0 6 6"><path d="M0 0 H6 V6 H4.4 C4.4 2.8 3.2 1.6 0 1.6 Z" fill="#14161c"/></svg>
<svg class="abs" style="left:962px;top:592px" width="7" height="7" viewBox="0 0 7 7"><path d="M7 0 V7 H0 C4.5 7 7 4.5 7 0 Z" fill="#0c1630"/></svg>
</body>
</html>
